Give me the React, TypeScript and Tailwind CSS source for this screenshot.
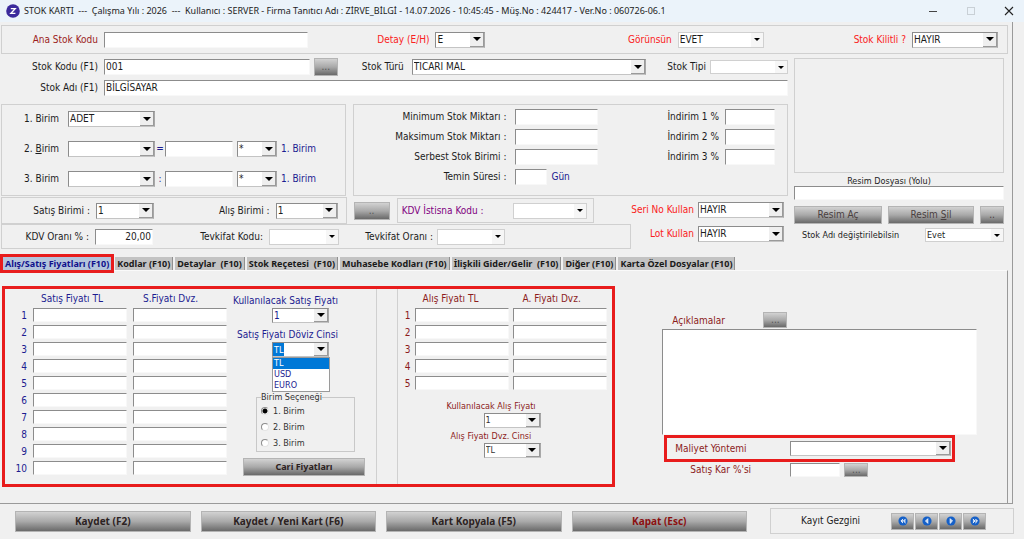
import { useId } from "react";
import type { ReactNode } from "react";
import clsx from "clsx";

const fieldBorder =
  "border border-t-[#8c8c8c] border-l-[#8c8c8c] border-r-[#f8f8f8] border-b-[#f8f8f8] bg-white";

type FieldProps = {
  id?: string;
  label?: string;
  value?: string;
  className?: string;
};

function Field({ id, label, value = "", className }: FieldProps) {
  return (
    <input
      id={id}
      aria-label={label}
      defaultValue={value}
      className={clsx("block min-w-0 px-px text-[#1c1c1c] outline-none", fieldBorder, className)}
    />
  );
}

type ComboProps = FieldProps & {
  options?: string[];
  flat?: boolean;
  selected?: boolean;
};

function Combo({ id, label, value = "", options, flat, selected, className }: ComboProps) {
  return (
    <div
      className={clsx(
        "relative min-w-0 border bg-white",
        flat
          ? "border-[#d0d0d0]"
          : "border-t-[#8c8c8c] border-l-[#8c8c8c] border-r-[#a8a8a8] border-b-[#c4c4c4]",
        className,
      )}
    >
      <select
        id={id}
        aria-label={label}
        defaultValue={value}
        className={clsx(
          "block h-full w-full appearance-none bg-transparent pl-px leading-none outline-none",
          selected && "text-transparent",
        )}
      >
        {(options ?? [value]).map((o) => (
          <option key={o}>{o}</option>
        ))}
      </select>
      {selected && (
        <span className="pointer-events-none absolute inset-y-0 left-0 flex items-center bg-[#0078d7] px-px text-white">
          {value}
        </span>
      )}
      <span
        className={clsx(
          "pointer-events-none absolute inset-y-0 right-0 flex items-center justify-center",
          flat ? "w-3 bg-[#f6f6f6]" : "w-[14px] border-r border-b border-[#9a9a9a] bg-[#efefef]",
        )}
      >
        <svg viewBox="0 0 8 4" className={flat ? "h-[3px] w-[6px]" : "h-1 w-2"}>
          <path d="M0 0h8L4 4z" fill="#000" />
        </svg>
      </span>
    </div>
  );
}

function GrayButton({
  children,
  label,
  className,
}: {
  children: ReactNode;
  label?: string;
  className?: string;
}) {
  return (
    <button
      type="button"
      aria-label={label}
      className={clsx(
        "flex items-center justify-center border border-[#b4b4b4] bg-linear-to-b from-[#d2d2d2] via-[#a9a9a9] to-[#6a6a6a]",
        className,
      )}
    >
      {children}
    </button>
  );
}

function PriceGrid({
  titles,
  rows,
  className,
}: {
  titles: [string, string];
  rows: number;
  className?: string;
}) {
  return (
    <div className={clsx("grid content-start gap-y-[3px] pt-[3px]", className)}>
      <span />
      <span className="h-[13px] pl-2 leading-[14px]">{titles[0]}</span>
      <span className="h-[13px] pl-2.5 leading-[14px]">{titles[1]}</span>
      {Array.from({ length: rows }, (_, i) => (
        <div key={i} className="contents">
          <span className="h-[14px] text-right leading-4">{i + 1}</span>
          <Field label={`${titles[0]} ${i + 1}`} className="h-[14px]" />
          <Field label={`${titles[1]} ${i + 1}`} className="h-[14px]" />
        </div>
      ))}
    </div>
  );
}

function TitleBar() {
  return (
    <header className="flex h-[22px] items-center bg-[#ebf3fa] pr-2.5 pl-1.5">
      <svg viewBox="0 0 14 14" className="size-[14px]">
        <circle cx="7" cy="7" r="6.8" fill="#3b2a9c" />
        <path d="M4.8 4.6h4.4L4.9 9.4h4.5" fill="none" stroke="#fff" strokeWidth="1.4" />
      </svg>
      <h1 className="ml-1 flex-1 font-['Noto_Sans',sans-serif] text-[9px] whitespace-pre text-[#222]">
        {
          "STOK KARTI  ---  Çalışma Yılı : 2026  ---  Kullanıcı : SERVER - Firma Tanıtıcı Adı : ZİRVE_BİLGİ - 14.07.2026 - 10:45:45 - Müş.No : 424417 - Ver.No : 060726-06.1"
        }
      </h1>
      <div className="flex items-center gap-[28px]">
        <button type="button" aria-label="Simge durumuna küçült">
          <svg viewBox="0 0 10 10" className="size-[10px]">
            <path d="M1 5.5h8" stroke="#444" />
          </svg>
        </button>
        <button type="button" aria-label="Ekranı kapla">
          <svg viewBox="0 0 10 10" className="size-[10px]">
            <rect x="1.5" y="1.5" width="7" height="7" fill="none" stroke="#c9d0d6" />
          </svg>
        </button>
        <button type="button" aria-label="Kapat">
          <svg viewBox="0 0 10 10" className="size-[10px]">
            <path d="M1 1l8 8M9 1L1 9" stroke="#222" strokeWidth="1.1" />
          </svg>
        </button>
      </div>
    </header>
  );
}

function TopRow() {
  const id = useId();
  const cell = "flex items-center justify-end gap-1.5";
  return (
    <section className="grid h-[29px] grid-cols-[306fr_177fr_278fr_234fr] items-center border border-[#d0d0d0] pr-[9px]">
      <div className="flex items-center gap-1.5">
        <label htmlFor={`${id}a`} className="w-24 text-right text-[#9c1c1c]">
          Ana Stok Kodu
        </label>
        <Field id={`${id}a`} className="h-4 flex-1" />
      </div>
      <div className={cell}>
        <label htmlFor={`${id}b`} className="text-[#fa2020]">
          Detay (E/H)
        </label>
        <Combo id={`${id}b`} value="E" options={["E", "H"]} className="h-4 w-[50px]" />
      </div>
      <div className={cell}>
        <label htmlFor={`${id}c`} className="text-[#fa2020]">
          Görünsün
        </label>
        <Combo id={`${id}c`} value="EVET" options={["EVET", "HAYIR"]} flat className="h-4 w-[86px]" />
      </div>
      <div className={cell}>
        <label htmlFor={`${id}d`} className="text-[#fa2020]">
          Stok Kilitli ?
        </label>
        <Combo id={`${id}d`} value="HAYIR" options={["EVET", "HAYIR"]} className="h-4 w-[86px]" />
      </div>
    </section>
  );
}

function CodeRows() {
  const id = useId();
  return (
    <div className="flex flex-col gap-1">
      <div className="flex items-center gap-1.5">
        <label htmlFor={`${id}a`} className="w-[97px] text-right">
          Stok Kodu (F1)
        </label>
        <div className="flex flex-1 items-center gap-1">
          <Field id={`${id}a`} value="001" className="h-4 flex-205" />
          <GrayButton label="Stok kodu ara" className="h-[18px] w-6 text-[#555]">
            ...
          </GrayButton>
          <label htmlFor={`${id}b`} className="w-[66px] pr-1 text-right">
            Stok Türü
          </label>
          <Combo id={`${id}b`} value="TİCARİ MAL" className="h-4 flex-236" />
          <label htmlFor={`${id}c`} className="w-[56px] text-right">
            Stok Tipi
          </label>
          <Combo id={`${id}c`} flat className="h-[14px] w-[78px]" />
        </div>
      </div>
      <div className="flex items-center gap-1.5">
        <label htmlFor={`${id}d`} className="w-[97px] text-right">
          Stok Adı (F1)
        </label>
        <Field id={`${id}d`} value="BİLGİSAYAR" className="h-4 flex-1" />
      </div>
    </div>
  );
}

function UnitBox() {
  const id = useId();
  return (
    <section className="flex h-[92px] flex-col gap-3.5 border border-[#d0d0d0] pt-1.5 pl-[22px]">
      <div className="flex h-4 items-center">
        <label htmlFor={id} className="w-11">
          1. Birim
        </label>
        <Combo id={id} value="ADET" className="h-4 w-[87px]" />
      </div>
      {[2, 3].map((n) => (
        <div key={n} className="flex h-4 items-center">
          <label htmlFor={id + n} className="w-11">
            {n}. {n === 2 ? <span className="underline">B</span> : "B"}irim
          </label>
          <Combo id={id + n} className="h-4 w-[87px]" />
          <span className="w-2.5 text-center text-[#1c1c90]">{n === 2 ? "=" : ":"}</span>
          <Field label={`${n}. birim katsayısı`} className="h-4 w-[68px]" />
          <Combo label={`${n}. birim işlemi`} value="*" options={["*", "/"]} className="ml-1 h-4 w-10" />
          <span className="ml-1 text-[#1c1c90]">1. Birim</span>
        </div>
      ))}
    </section>
  );
}

function StockLimitBox() {
  const id = useId();
  const rows = [
    ["Minimum Stok Miktarı :", "İndirim 1 %"],
    ["Maksimum Stok Miktarı :", "İndirim 2 %"],
    ["Serbest Stok Birimi :", "İndirim 3 %"],
  ];
  return (
    <section className="flex h-[92px] flex-col gap-1 border border-[#d0d0d0] pt-1 pr-3">
      {rows.map(([left, right], i) => (
        <div key={left} className="flex items-center">
          <label htmlFor={`${id}l${i}`} className="w-[152px] text-right">
            {left}
          </label>
          <Field id={`${id}l${i}`} className="ml-[9px] h-4 w-[83px]" />
          <label htmlFor={`${id}r${i}`} className="flex-1 pr-1.5 text-right">
            {right}
          </label>
          <Field id={`${id}r${i}`} className="h-4 w-[50px]" />
        </div>
      ))}
      <div className="flex items-center">
        <label htmlFor={`${id}t`} className="w-[152px] text-right">
          Temin Süresi :
        </label>
        <Field id={`${id}t`} className="ml-[9px] h-4 w-8" />
        <span className="ml-1 text-[#1c1c90]">Gün</span>
      </div>
    </section>
  );
}

function TaxRows() {
  const id = useId();
  return (
    <div className="flex">
      <div className="flex flex-1 flex-col">
        <div className="grid h-[27px] grid-cols-[345fr_36px_197fr] items-center gap-[7px] pr-[37px]">
          <section className="flex h-full items-center border border-[#d0d0d0] pr-2">
            <label htmlFor={`${id}a`} className="w-[88px] text-right">
              Satış Birimi :
            </label>
            <Combo id={`${id}a`} value="1" className="ml-1.5 h-4 w-[58px]" />
            <label htmlFor={`${id}b`} className="ml-auto">
              Alış Birimi :
            </label>
            <Combo id={`${id}b`} value="1" className="ml-1.5 h-4 w-[62px]" />
          </section>
          <GrayButton label="Birim seç" className="h-[18px] text-[#555]">
            ..
          </GrayButton>
          <section className="flex h-[25px] items-center justify-between border border-[#d0d0d0] pr-1.5 pl-1 text-[#800080]">
            <label htmlFor={`${id}c`}>KDV İstisna Kodu :</label>
            <Combo id={`${id}c`} flat className="h-4 w-[74px]" />
          </section>
        </div>
        <section className="flex h-[25px] items-center border border-[#d0d0d0]">
          <label htmlFor={`${id}d`} className="w-[87px] text-right">
            KDV Oranı % :
          </label>
          <Field id={`${id}d`} value="20,00" className="ml-1.5 h-4 w-[58px] text-right" />
          <label htmlFor={`${id}e`} className="w-[110px] text-right">
            Tevkifat Kodu:
          </label>
          <Combo id={`${id}e`} flat className="ml-1.5 h-4 w-[70px]" />
          <label htmlFor={`${id}f`} className="w-[94px] text-right">
            Tevkifat Oranı :
          </label>
          <Combo id={`${id}f`} flat className="ml-1 h-4 w-[68px]" />
        </section>
      </div>
      <div className="flex w-[157px] flex-col gap-2 pt-[5px] pr-1">
        {["Seri No Kullan", "Lot Kullan"].map((t) => (
          <div key={t} className="flex items-center justify-end gap-1">
            <label htmlFor={id + t} className="whitespace-nowrap text-[#fa2020]">
              {t}
            </label>
            <Combo
              id={id + t}
              value="HAYIR"
              options={["EVET", "HAYIR"]}
              className="h-4 w-[86px] shrink-0"
            />
          </div>
        ))}
      </div>
    </div>
  );
}

function PicturePanel() {
  const id = useId();
  return (
    <aside className="flex w-[210px] flex-col text-[9px]">
      <div className="h-[115px] border border-[#d0d0d0]" />
      <label htmlFor={`${id}a`} className="h-[13px] pr-5 text-center leading-4">
        Resim Dosyası (Yolu)
      </label>
      <Field id={`${id}a`} className="h-[14px]" />
      <div className="mt-1.5 flex gap-1.5 text-[10px] text-[#4a4040]">
        <GrayButton className="h-[18px] flex-88">Resim Aç</GrayButton>
        <GrayButton className="h-[18px] flex-86">
          Resim&nbsp;<span className="underline">S</span>il
        </GrayButton>
        <GrayButton label="Diğer resimler" className="h-[18px] w-6">
          ..
        </GrayButton>
      </div>
      <div className="mt-[3px] flex items-center justify-between pl-2">
        <label htmlFor={`${id}b`}>Stok Adı değiştirilebilsin</label>
        <Combo id={`${id}b`} value="Evet" options={["Evet", "Hayır"]} flat className="h-[14px] w-[79px]" />
      </div>
    </aside>
  );
}

const tabs = [
  "Alış/Satış Fiyatları (F10)",
  "Kodlar (F10)",
  "Detaylar  (F10)",
  "Stok Reçetesi  (F10)",
  "Muhasebe Kodları (F10)",
  "İlişkili Gider/Gelir  (F10)",
  "Diğer (F10)",
  "Karta Özel Dosyalar (F10)",
];

function TabBar() {
  return (
    <div role="tablist" className="flex gap-0.5 pl-0.5">
      {tabs.map((t, i) => (
        <button
          key={t}
          type="button"
          role="tab"
          aria-selected={i === 0}
          className={clsx(
            "h-[13px] px-0.5 font-['Noto_Sans',sans-serif] text-[9px] leading-[13px] font-bold whitespace-pre",
            i === 0
              ? "z-10 mr-0.5 bg-[#b4c4dc] text-[#10108c] outline-3 outline-[#e81c1c]"
              : "border-r border-[#909090] bg-[#c3c3c3] text-[#1a1a1a]",
          )}
        >
          {t}
        </button>
      ))}
    </div>
  );
}

function SalesPrices() {
  const id = useId();
  const currencies = ["TL", "USD", "EURO"];
  return (
    <div className="flex border-r border-[#d0d0d0] text-[#1c1c90]">
      <PriceGrid
        titles={["Satış Fiyatı TL", "S.Fiyatı Dvz."]}
        rows={10}
        className="grid-cols-[22px_94px_94px] gap-x-1.5"
      />
      <div className="ml-1.5 flex flex-col items-start pt-1">
        <label htmlFor={`${id}a`} className="h-[15px] leading-[15px]">
          Kullanılacak Satış Fiyatı
        </label>
        <Combo
          id={`${id}a`}
          value="1"
          options={["1", "2", "3"]}
          className="ml-[39px] h-[15px] w-[57px]"
        />
        <label htmlFor={`${id}b`} className="mt-1 h-[15px] pl-1 leading-4">
          Satış Fiyatı Döviz Cinsi
        </label>
        <div className="relative ml-[39px] text-[9px]">
          <Combo id={`${id}b`} value="TL" options={currencies} selected className="h-[15px] w-[57px]" />
          <ul className="absolute top-[15px] left-0 z-10 w-[58px] border border-[#9a9a9a] bg-white">
            {currencies.map((c) => (
              <li
                key={c}
                className={clsx("h-[11px] pl-px leading-[11px]", c === "TL" && "bg-[#0078d7] text-white")}
              >
                {c}
              </li>
            ))}
          </ul>
        </div>
        <fieldset className="mt-[34px] ml-[23px] h-[61px] w-[99px] border border-[#c8c8c8] pl-1 text-[9px] text-[#333]">
          <legend className="h-3 leading-3">Birim Seçeneği</legend>
          {[1, 2, 3].map((n) => (
            <label key={n} className="flex h-4 items-center gap-1">
              <input
                type="radio"
                name={`${id}r`}
                defaultChecked={n === 1}
                className="size-2 appearance-none rounded-full border border-[#8c8c8c] border-r-[#e4e4e4] border-b-[#e4e4e4] bg-white checked:bg-[radial-gradient(circle,#000_0_2px,#fff_3px)]"
              />
              {n}. Birim
            </label>
          ))}
        </fieldset>
        <GrayButton className="mt-1.5 ml-2.5 h-[18px] w-[122px] font-['Noto_Sans',sans-serif] text-[9px] font-bold text-[#2c2222]">
          Cari Fiyatları
        </GrayButton>
      </div>
    </div>
  );
}

function PurchasePrices() {
  const id = useId();
  return (
    <div className="ml-5 flex flex-col border-l border-[#d0d0d0] text-[#8c1c1c]">
      <PriceGrid
        titles={["Alış Fiyatı TL", "A. Fiyatı Dvz."]}
        rows={5}
        className="grid-cols-[13px_94px_94px] gap-x-1"
      />
      <div className="mt-2 flex flex-col items-start pl-[49px] text-[9px]">
        <label htmlFor={`${id}a`} className="h-[15px] leading-4">
          Kullanılacak Alış Fiyatı
        </label>
        <Combo id={`${id}a`} value="1" options={["1", "2", "3"]} className="ml-[37px] h-[15px] w-[57px] text-[#333]" />
        <label htmlFor={`${id}b`} className="h-[15px] pl-1 leading-4">
          Alış Fiyatı Dvz. Cinsi
        </label>
        <Combo
          id={`${id}b`}
          value="TL"
          options={["TL", "USD", "EURO"]}
          className="ml-[37px] h-[15px] w-[57px] text-[#333]"
        />
      </div>
    </div>
  );
}

function NotesPanel() {
  const id = useId();
  return (
    <div className="flex flex-col pt-[26px] text-[#8c1c1c]">
      <div className="flex h-[17px] items-start">
        <label htmlFor={`${id}a`} className="w-[101px] pl-2.5 leading-[18px]">
          Açıklamalar
        </label>
        <GrayButton label="Açıklama seç" className="h-4 w-6 text-[#555]">
          ...
        </GrayButton>
      </div>
      <textarea id={`${id}a`} className={clsx("block h-[106px] resize-none outline-none", fieldBorder)} />
      <div className="mr-[22px] ml-0.5 flex h-[27px] items-center border-3 border-[#e81c1c] pr-px">
        <label htmlFor={`${id}b`} className="w-[123px] pl-2">
          Maliyet Yöntemi
        </label>
        <Combo id={`${id}b`} className="h-[15px] flex-1" />
      </div>
      <div className="flex items-center">
        <label htmlFor={`${id}c`} className="w-32 pl-7">
          Satış Kar %'si
        </label>
        <Field id={`${id}c`} className="h-[14px] w-[50px]" />
        <GrayButton label="Kar oranı seç" className="ml-1 h-[14px] w-6 text-[#555]">
          ...
        </GrayButton>
      </div>
    </div>
  );
}

const navIcons = [
  { label: "İlk kayıt", d: "M6 3.5L3.5 6 6 8.5M9 3.5L6.5 6 9 8.5" },
  { label: "Önceki kayıt", d: "M7 3.2L4.2 6 7 8.8z" },
  { label: "Sonraki kayıt", d: "M5 3.2L7.8 6 5 8.8z" },
  { label: "Son kayıt", d: "M3.5 3.5L6 6 3.5 8.5M6.5 3.5L9 6 6.5 8.5" },
];

function Footer() {
  return (
    <footer className="grid grid-cols-[732fr_244fr] items-center gap-[23px] pt-1 pr-2.5 pb-1.5 pl-[15px]">
      <div className="flex gap-2.5 font-['Noto_Sans',sans-serif] font-bold text-[#2c2222]">
        <GrayButton className="h-[21px] flex-1">Kaydet (F2)</GrayButton>
        <GrayButton className="h-[21px] flex-1">Kaydet / Yeni Kart (F6)</GrayButton>
        <GrayButton className="h-[21px] flex-1">Kart Kopyala (F5)</GrayButton>
        <GrayButton className="h-[21px] flex-1 text-[#8c1010]">Kapat (Esc)</GrayButton>
      </div>
      <nav className="flex h-[26px] items-center justify-between border border-[#d0d0d0] pr-[27px] pl-[30px]">
        <span>Kayıt Gezgini</span>
        <div className="flex gap-px">
          {navIcons.map((n) => (
            <GrayButton key={n.label} label={n.label} className="h-[17px] w-[23px]">
              <svg viewBox="0 0 12 12" className="size-[10px]">
                <circle cx="6" cy="6" r="5.5" fill="#1560c8" />
                <path d={n.d} fill="#fff" fillOpacity="0.7" stroke="#fff" strokeWidth="1" />
              </svg>
            </GrayButton>
          ))}
        </div>
      </nav>
    </footer>
  );
}

export default function App() {
  return (
    <div className="min-h-screen bg-[#f0f0f0] font-['DejaVu_Sans_Condensed','DejaVu_Sans',sans-serif] text-[10px] leading-4 text-[#1c1c1c]">
      <TitleBar />
      <main className="mr-[11px] border-r border-b border-[#9a9a9a] pt-[3px]">
        <div className="pr-1 pl-px">
          <TopRow />
          <div className="flex gap-1.5 pt-1 pr-1">
            <div className="flex min-w-0 flex-1 flex-col">
              <CodeRows />
              <div className="grid grid-cols-[345fr_434fr] gap-[7px] pt-2 pb-px">
                <UnitBox />
                <StockLimitBox />
              </div>
              <TaxRows />
            </div>
            <PicturePanel />
          </div>
          <div className="pt-2">
            <TabBar />
          </div>
        </div>
        <div className="mr-1 grid grid-cols-[614fr_315fr] gap-[47px] border-t border-r border-t-[#fafafa] border-r-[#9a9a9a] pt-[15px] pr-[30px] pb-4 pl-0.5">
          <section className="grid h-[201px] grid-cols-[372fr_236fr] border-3 border-[#e81c1c]">
            <SalesPrices />
            <PurchasePrices />
          </section>
          <NotesPanel />
        </div>
      </main>
      <Footer />
    </div>
  );
}
